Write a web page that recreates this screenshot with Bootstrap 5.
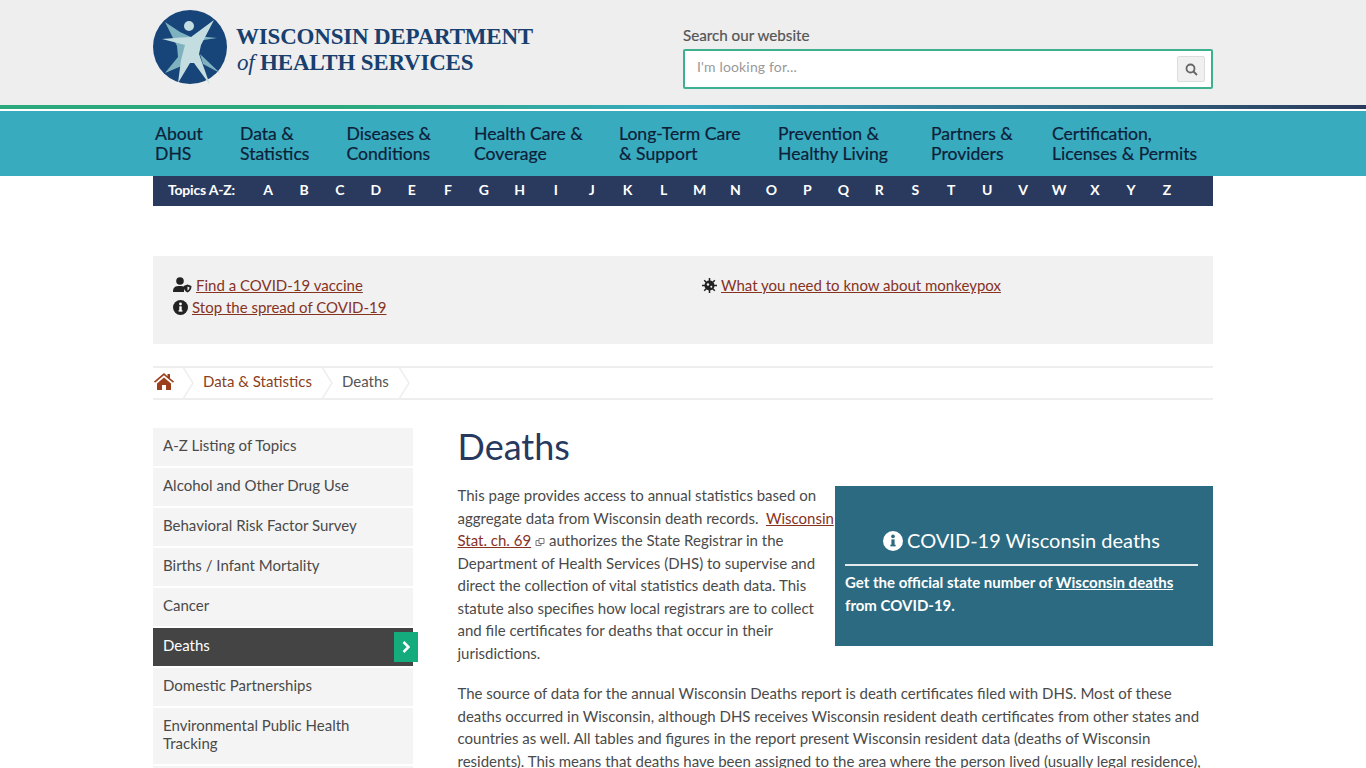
<!DOCTYPE html>
<html lang="en"><head><meta charset="utf-8"><title>Deaths</title>
<link href="https://cdn.jsdelivr.net/npm/bootstrap@5.3.0/dist/css/bootstrap.min.css" rel="stylesheet">
<style>
html,body{height:768px;overflow:hidden}
body{font-family:Lato,"Liberation Sans",sans-serif;font-size:15px;line-height:22.5px;color:#4a4a4a;background:#fff}
.wrap{width:1060px;margin:0 auto}
.hdr{background:#eee;height:105px}
.hdr .wrap{height:105px}
.logo-wrap{padding-top:10px}
.logo-txt{font-family:"Liberation Serif",serif;font-weight:700;color:#17406f;font-size:23px;line-height:26px;letter-spacing:-.2px;white-space:nowrap;margin-left:9px;padding-top:14px}
.logo-txt i{font-weight:400;margin-left:1px}
.srch{width:530px;padding-top:26px}
.srch-lab{font-size:15.2px;line-height:19px;color:#555;margin-bottom:4px;-webkit-text-stroke:.2px #555}
.srch-box{height:40px;border:2px solid #3fb08f;border-radius:2px;background:#fff;padding:0 6px 0 12px}
.srch-ph{font-size:14px;color:#999;letter-spacing:.15px;padding-bottom:4px}
.srch-btn{width:28px;height:26px;background:#f0f0f0;border:1px solid #ddd;border-radius:2px}
.rule{height:6px;background:#fff}
.rule-in{height:4px;background:linear-gradient(90deg,#2aaa7c 0,#2aaa7c 25%,#38a9c0 50%,#2b3a5c 100%)}
.mainnav{background:#38abbf;height:65px}
.mainnav a{color:#0e2038;font-size:17.6px;line-height:20px;text-decoration:none;display:block;flex:none;white-space:nowrap;-webkit-text-stroke:.2px #0e2038}
.mainnav a:nth-child(1){width:85px}
.mainnav a:nth-child(2){width:106.500px}
.mainnav a:nth-child(3){width:127.500px}
.mainnav a:nth-child(4){width:145px}
.mainnav a:nth-child(5){width:159px}
.mainnav a:nth-child(6){width:153px}
.mainnav a:nth-child(7){width:121px}
.mainnav .wrap{padding:13px 0 0 2px}
.az{background:#2a3a5e;height:30px;padding:0 15px 2px;color:#fff;font-weight:700;font-size:14px;letter-spacing:-.2px}
.az a{color:#fff;text-decoration:none;width:35.96px;text-align:center;display:block;font-weight:700;font-size:14px}
.az-lab{width:82px}
.alerts{background:#f1f1f1;height:88px;margin-top:50px;padding:18px 20px;color:#222}
.alerts a,.body-link{color:#86331f;text-decoration:underline}
.al-col{width:529px}
.al-row{height:22px}
.crumb{height:34px;margin-top:22px;border-top:2px solid #eee;border-bottom:2px solid #eee}
.crumb-i{padding:0 10px 0 20px;position:relative;line-height:26px;color:#555}
.crumb-i a{color:#8a3f22;text-decoration:none}
.crumb-home{padding:0 9px 0 1px}
.crumb-home svg:first-child{vertical-align:-3px}
.chev{position:absolute;right:-11px;top:-1px}
.cols{margin-top:28px}
.side{width:260px;flex:none}
.side-i{background:#f4f4f4;padding:8px 10px;margin-bottom:2px;font-size:15px;line-height:18px;color:#4a4a4a;min-height:38px;position:relative}
.side-i.on{background:#444;color:#fff}
.side-two{padding-bottom:12px}
.tick{position:absolute;right:-5px;top:4px;width:24px;height:30px;background:#14ab7d;color:#fff}
.cont{margin-left:44.500px;width:755.500px}
h1.ttl{font-size:36px;line-height:40px;font-weight:400;color:#27395e;margin:-2px 0 18px}
.cont p{margin:0 0 18px;font-size:15px;line-height:22.5px}
.box{float:right;width:378px;height:160px;background:#2b6a80;color:#fff;margin-top:2px;padding:39px 10px 0}
.box-h{font-size:20px;line-height:30px;text-align:center;padding-bottom:9px;border-bottom:2px solid #e4eaec;margin-right:5px;margin-bottom:5px}
.box p{font-weight:700;font-size:15px;margin:0}
.box a{color:#fff;text-decoration:underline}
</style></head><body>
<div class="hdr"><div class="wrap d-flex justify-content-between">
<div class="d-flex align-items-start logo-wrap">
<svg width="74" height="74" viewBox="0 0 74 74"><circle cx="37" cy="37" r="37" fill="#17457a"/><circle cx="36" cy="16" r="5" fill="#c4dde0"/><path d="M12 12 27 22 38 27 36 40 31 55 12 63 25 47 24 36z" fill="#7fb2bf"/><path d="M64 28 44 26 44 31z" fill="#7fb2bf"/><path d="M67 63 47 44 50 54z" fill="#7fb2bf"/><path d="M9 29 28 27.500 38 27 61 10 48 35 46 44 57 75 41 53 37 53 25 73 28 50 32 35z" fill="#c4dde0"/></svg>
<div class="logo-txt">WISCONSIN DEPARTMENT<br><i>of</i> HEALTH SERVICES</div></div>
<div class="srch"><div class="srch-lab">Search our website</div>
<div class="srch-box d-flex align-items-center justify-content-between"><span class="srch-ph">I'm looking for...</span>
<div class="srch-btn d-flex align-items-center justify-content-center"><svg width="13" height="13" viewBox="0 0 13 13" fill="none" stroke="#666" stroke-width="1.800"><circle cx="5.500" cy="5.500" r="4"/><path d="M8.500 8.500 12 12"/></svg></div></div></div>
</div></div>
<div class="rule"><div class="rule-in"></div></div>
<div class="mainnav"><div class="wrap d-flex">
<a href="#">About<br>DHS</a><a href="#">Data &amp;<br>Statistics</a><a href="#">Diseases &amp;<br>Conditions</a><a href="#">Health Care &amp;<br>Coverage</a><a href="#">Long-Term Care<br>&amp; Support</a><a href="#">Prevention &amp;<br>Healthy Living</a><a href="#">Partners &amp;<br>Providers</a><a href="#">Certification,<br>Licenses &amp; Permits</a>
</div></div>
<div class="wrap">
<div class="az d-flex align-items-center"><span class="az-lab">Topics A-Z:</span><a href="#">A</a><a href="#">B</a><a href="#">C</a><a href="#">D</a><a href="#">E</a><a href="#">F</a><a href="#">G</a><a href="#">H</a><a href="#">I</a><a href="#">J</a><a href="#">K</a><a href="#">L</a><a href="#">M</a><a href="#">N</a><a href="#">O</a><a href="#">P</a><a href="#">Q</a><a href="#">R</a><a href="#">S</a><a href="#">T</a><a href="#">U</a><a href="#">V</a><a href="#">W</a><a href="#">X</a><a href="#">Y</a><a href="#">Z</a></div>
<div class="alerts d-flex">
<div class="al-col">
<div class="al-row d-flex align-items-center gap-1"><svg width="19" height="16" viewBox="0 0 19 16"><circle cx="7" cy="4" r="3.800" fill="#222"/><path d="M0 15c0-5 2-6 7-6 2 0 3 .3 4 1v5z" fill="#222"/><path d="M14.500 7.500l4 1.500c0 3-1.500 5.500-4 6.500-2.500-1-4-3.500-4-6.500z" fill="#222"/><path d="M14.500 9.500l2 .7c0 1.500-.8 2.800-2 3.300z" fill="#f1f1f1"/></svg><a href="#">Find a COVID-19 vaccine</a></div>
<div class="al-row d-flex align-items-center gap-1"><svg width="15" height="15" viewBox="0 0 15 15"><circle cx="7.500" cy="7.500" r="7.500" fill="#222"/><rect x="6.300" y="6.300" width="2.400" height="5" fill="#fff"/><rect x="5.500" y="10.300" width="4" height="1.200" fill="#fff"/><circle cx="7.500" cy="4" r="1.400" fill="#fff"/></svg><a href="#">Stop the spread of COVID-19</a></div>
</div>
<div><div class="al-row d-flex align-items-center gap-1"><svg width="15" height="15" viewBox="0 0 15 15"><g stroke="#222" stroke-width="1.500"><path d="M7.500 0v15M0 7.500h15M2.200 2.200l10.600 10.600M12.800 2.200 2.200 12.800"/></g><circle cx="7.500" cy="7.500" r="5" fill="#222"/><circle cx="6" cy="6.500" r="1.200" fill="#f1f1f1"/><circle cx="9.300" cy="8.800" r="1" fill="#f1f1f1"/></svg><a href="#">What you need to know about monkeypox</a></div></div>
</div>
<div class="crumb d-flex">
<div class="crumb-i crumb-home"><svg width="20" height="17" viewBox="0 0 20 17"><path d="M10 0 0 8.500l1 1.300L10 2.300l9 7.500 1-1.300-4-3.300V1h-2.500v2.300z" fill="#9c3f1c"/><path d="M3 10.500 10 4.500l7 6V17h-5v-5H8v5H3z" fill="#9c3f1c"/></svg><svg class="chev" width="12" height="32" viewBox="0 0 12 32" fill="none" stroke="#eee" stroke-width="1.500"><path d="M1 0l10 16L1 32"/></svg></div>
<div class="crumb-i"><a href="#">Data &amp; Statistics</a><svg class="chev" width="12" height="32" viewBox="0 0 12 32" fill="none" stroke="#eee" stroke-width="1.500"><path d="M1 0l10 16L1 32"/></svg></div>
<div class="crumb-i">Deaths<svg class="chev" width="12" height="32" viewBox="0 0 12 32" fill="none" stroke="#eee" stroke-width="1.500"><path d="M1 0l10 16L1 32"/></svg></div>
</div>
<div class="cols d-flex">
<div class="side">
<div class="side-i">A-Z Listing of Topics</div><div class="side-i">Alcohol and Other Drug Use</div><div class="side-i">Behavioral Risk Factor Survey</div><div class="side-i">Births / Infant Mortality</div><div class="side-i">Cancer</div>
<div class="side-i on">Deaths<span class="tick d-flex align-items-center justify-content-center"><svg width="8" height="12" viewBox="0 0 8 12" fill="none" stroke="#fff" stroke-width="2.500"><path d="M1.500 1l5 5-5 5"/></svg></span></div>
<div class="side-i">Domestic Partnerships</div><div class="side-i side-two">Environmental Public Health Tracking</div><div class="side-i"></div>
</div>
<div class="cont">
<h1 class="ttl">Deaths</h1>
<div class="box"><div class="box-h"><svg width="20" height="20" viewBox="0 0 15 15" class="me-1" style="vertical-align:-3px"><circle cx="7.500" cy="7.500" r="7.500" fill="#fff"/><rect x="6.300" y="6.300" width="2.400" height="5" fill="#2b6a80"/><rect x="5.500" y="10.300" width="4" height="1.200" fill="#2b6a80"/><circle cx="7.500" cy="4" r="1.400" fill="#2b6a80"/></svg>COVID-19 Wisconsin deaths</div>
<p>Get the official state number of <a href="#">Wisconsin deaths</a><br>from COVID-19.</p></div>
<p>This page provides access to annual statistics based on aggregate data from Wisconsin death records.&nbsp; <a href="#" class="body-link">Wisconsin Stat. ch. 69</a><svg width="10" height="10" viewBox="0 0 10 10" fill="none" stroke="#777" class="ms-1"><path d="M4 1.500h5v5h-5zM4 3.500H1v5h5V6.500"/></svg> authorizes the State Registrar in the Department of Health Services (DHS) to supervise and direct the collection of vital statistics death data. This statute also specifies how local registrars are to collect and file certificates for deaths that occur in their jurisdictions.</p>
<p>The source of data for the annual Wisconsin Deaths report is death certificates filed with DHS. Most of these deaths occurred in Wisconsin, although DHS receives Wisconsin resident death certificates from other states and countries as well. All tables and figures in the report present Wisconsin resident data (deaths of Wisconsin residents). This means that deaths have been assigned to the area where the person lived (usually legal residence),</p>
</div></div>
</div>
<script src="https://cdn.jsdelivr.net/npm/bootstrap@5.3.0/dist/js/bootstrap.bundle.min.js"></script>
</body></html>
